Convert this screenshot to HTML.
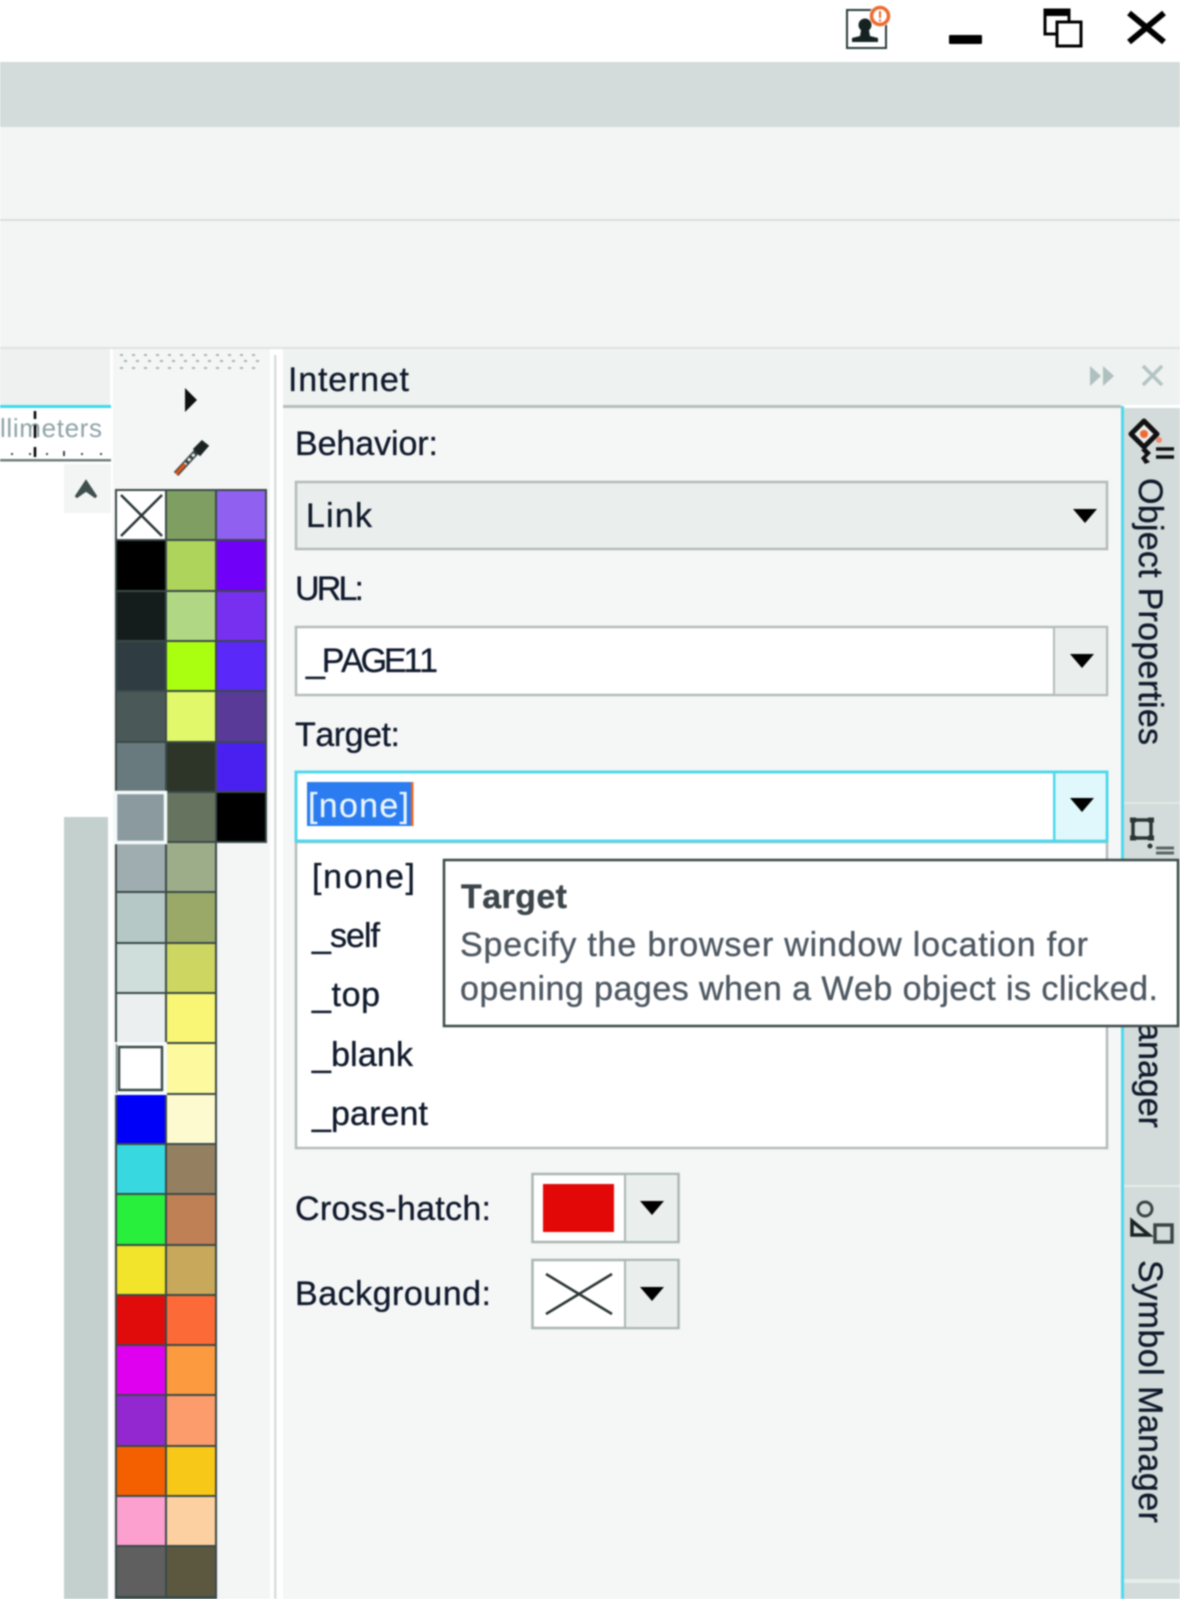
<!DOCTYPE html>
<html lang="en"><head><meta charset="utf-8"><title>Internet panel</title>
<style>
html,body{margin:0;padding:0;background:#fff;width:1180px;height:1599px;overflow:hidden}
svg{display:block;filter:blur(.7px)}
text{font-family:"Liberation Sans",sans-serif;font-size:34px;fill:#101a2c;stroke:#101a2c;stroke-width:.35px;font-kerning:none}
</style></head><body>
<svg xmlns="http://www.w3.org/2000/svg" width="1180" height="1599" viewBox="0 0 1180 1599">
<rect width="1180" height="1599" fill="#fff"/>
<rect y="62" width="1180" height="65" fill="#d3dcda"/>
<rect y="127" width="1180" height="221" fill="#f3f5f4"/>
<rect y="219" width="1180" height="2" fill="#d8dedc"/>
<rect y="347" width="1180" height="2" fill="#dde2e0"/>
<!-- window icons -->
<rect x="847" y="10" width="39" height="38" fill="none" stroke="#2a3a3a" stroke-width="2"/>
<circle cx="865" cy="25" r="6.5" fill="#162222"/>
<path d="M861 30h8l1 6 8 2v4h-26v-4l8-2z" fill="#162222"/>
<circle cx="880" cy="16" r="11" fill="#fff"/>
<circle cx="880" cy="16" r="8.5" fill="#fff" stroke="#ee6a30" stroke-width="3.5"/>
<rect x="879" y="11" width="2" height="7" fill="#ee6a30"/><rect x="879" y="19.5" width="2" height="2" fill="#ee6a30"/>
<rect x="949" y="35" width="33" height="9" rx="1" fill="#000"/>
<rect x="1045" y="10" width="24" height="24" fill="#fff" stroke="#000" stroke-width="3"/>
<rect x="1044" y="9" width="26" height="7" fill="#000"/>
<rect x="1057" y="22" width="24" height="24" fill="#fff" stroke="#000" stroke-width="3"/>
<path d="M1129 13l35 29M1164 13l-35 29" stroke="#000" stroke-width="6" fill="none"/>
<!-- left ruler -->
<rect y="349" width="110" height="56" fill="#eef1ef"/>
<rect y="405" width="111" height="3" fill="#3fd8ec"/>
<rect y="408" width="111" height="51" fill="#fff"/>
<rect y="459" width="111" height="2.5" fill="#6e7e7c"/>
<text x="0" y="437" textLength="102" style="font-size:26px;fill:#8fa3a8;stroke:none">llimeters</text>
<path d="M35 411v8M35 425v13M35 447v10" stroke="#000" stroke-width="2.5" fill="none"/>
<path d="M11 454h2M29 454h2M46 454h2M64 451v5M81 454h2M100 454h2" stroke="#3a4a48" stroke-width="2" fill="none"/>
<rect x="64" y="464" width="47" height="49" fill="#f3f5f4"/>
<path d="M76 497l10-15 10 15-10-7z" fill="#3f4e4e" stroke="#3f4e4e" stroke-width="3"/>
<rect x="64" y="817" width="44" height="782" fill="#c4d0ce"/>
<!-- palette column -->
<rect x="113" y="349" width="157" height="1250" fill="#f4f5f5"/>
<rect x="274" y="355" width="2.5" height="1244" fill="#d8dedc"/>
<path d="M120 355h140M124 361h136M120 368h140" stroke="#a8b2b0" stroke-width="2" stroke-dasharray="3 9" fill="none"/>
<path d="M185 388l12 12-12 12z" fill="#111"/>
<path d="M176 474l23-25" stroke="#3a4444" stroke-width="6" fill="none"/>
<path d="M176 474l23-25" stroke="#e6eaea" stroke-width="3" stroke-dasharray="3 3" fill="none"/>
<path d="M176 474l9-10" stroke="#d8551c" stroke-width="3.5" fill="none"/>
<path d="M195 449l7-7 5 4-7 8z" fill="#1a2222" stroke="#1a2222" stroke-width="3"/>
<g stroke="#3a4a48" stroke-width="2">
<rect x="116" y="490" width="50" height="50" fill="#fff"/><rect x="166" y="490" width="50" height="50" fill="#7f9f62"/><rect x="216" y="490" width="50" height="50" fill="#9060f0"/>
<rect x="116" y="540" width="50" height="51" fill="#000"/><rect x="166" y="540" width="50" height="51" fill="#aed45b"/><rect x="216" y="540" width="50" height="51" fill="#7000f8"/>
<rect x="116" y="591" width="50" height="50" fill="#141c1c"/><rect x="166" y="591" width="50" height="50" fill="#b0d884"/><rect x="216" y="591" width="50" height="50" fill="#7830f0"/>
<rect x="116" y="641" width="50" height="50" fill="#2f3d42"/><rect x="166" y="641" width="50" height="50" fill="#aaff10"/><rect x="216" y="641" width="50" height="50" fill="#5a28f8"/>
<rect x="116" y="691" width="50" height="51" fill="#4a5858"/><rect x="166" y="691" width="50" height="51" fill="#e0f86a"/><rect x="216" y="691" width="50" height="51" fill="#5a3a98"/>
<rect x="116" y="742" width="50" height="50" fill="#687a7e"/><rect x="166" y="742" width="50" height="50" fill="#2d3529"/><rect x="216" y="742" width="50" height="50" fill="#4a20f0"/>
<rect x="116" y="792" width="50" height="50" fill="#8a9a9e"/><rect x="166" y="792" width="50" height="50" fill="#66735f"/><rect x="216" y="792" width="50" height="50" fill="#000"/>
<rect x="116" y="842" width="50" height="50" fill="#9fadb0"/><rect x="166" y="842" width="50" height="50" fill="#9ead89"/>
<rect x="116" y="892" width="50" height="51" fill="#b6c8c6"/><rect x="166" y="892" width="50" height="51" fill="#9aa968"/>
<rect x="116" y="943" width="50" height="50" fill="#d0dedb"/><rect x="166" y="943" width="50" height="50" fill="#cdd660"/>
<rect x="116" y="993" width="50" height="50" fill="#ecefef"/><rect x="166" y="993" width="50" height="50" fill="#f8f674"/>
<rect x="116" y="1043" width="50" height="51" fill="#fff"/><rect x="166" y="1043" width="50" height="51" fill="#fdf99f"/>
<rect x="116" y="1094" width="50" height="50" fill="#0000f8"/><rect x="166" y="1094" width="50" height="50" fill="#fefad0"/>
<rect x="116" y="1144" width="50" height="50" fill="#38d8e0"/><rect x="166" y="1144" width="50" height="50" fill="#948060"/>
<rect x="116" y="1194" width="50" height="51" fill="#28ee3c"/><rect x="166" y="1194" width="50" height="51" fill="#c08056"/>
<rect x="116" y="1245" width="50" height="50" fill="#f2e42a"/><rect x="166" y="1245" width="50" height="50" fill="#c8a85a"/>
<rect x="116" y="1295" width="50" height="50" fill="#e00c0c"/><rect x="166" y="1295" width="50" height="50" fill="#fc6a38"/>
<rect x="116" y="1345" width="50" height="50" fill="#e000f0"/><rect x="166" y="1345" width="50" height="50" fill="#fc9a40"/>
<rect x="116" y="1395" width="50" height="51" fill="#9428d0"/><rect x="166" y="1395" width="50" height="51" fill="#fc9c6c"/>
<rect x="116" y="1446" width="50" height="50" fill="#f46000"/><rect x="166" y="1446" width="50" height="50" fill="#f8c818"/>
<rect x="116" y="1496" width="50" height="50" fill="#fca0d0"/><rect x="166" y="1496" width="50" height="50" fill="#fcd0a0"/>
<rect x="116" y="1546" width="50" height="51" fill="#5f5f5f"/><rect x="166" y="1546" width="50" height="51" fill="#5c5840"/>
<rect x="116" y="1597" width="50" height="10" fill="#3a4a48"/><rect x="166" y="1597" width="50" height="10" fill="#3a4a48"/>
</g>
<path d="M121 495l41 41M162 495l-41 41" stroke="#2a3434" stroke-width="2.5" fill="none"/>
<rect x="115.5" y="792.5" width="50" height="50" fill="none" stroke="#f4fafa" stroke-width="3.5"/>
<rect x="115" y="1043" width="51" height="51" fill="none" stroke="#f4fafa" stroke-width="2"/>
<rect x="119" y="1047" width="43" height="43" fill="#fff" stroke="#3a4a48" stroke-width="2.5"/>
<!-- panel -->
<rect x="283" y="349" width="897" height="56" fill="#eef2f0"/>
<rect x="283" y="405" width="838" height="3" fill="#b5bfbd"/>
<rect x="283" y="408" width="838" height="1191" fill="#f5f6f6"/>
<text x="288" y="391" textLength="121">Internet</text>
<path d="M1090 366l11 10-11 10zM1103 366l11 10-11 10z" fill="#aec0c0"/>
<path d="M1143 366l19 19M1162 366l-19 19" stroke="#b2c4c2" stroke-width="3.5" fill="none"/>
<text x="295" y="455" textLength="143">Behavior:</text>
<rect x="296" y="482" width="811" height="67" fill="#eaeeec" stroke="#b3bcba" stroke-width="2.5"/>
<text x="306" y="527" textLength="66">Link</text>
<path d="M1073 509h24l-12 14z" fill="#000"/>
<text x="295" y="600" textLength="69">URL:</text>
<rect x="296" y="627" width="811" height="68" fill="#fff" stroke="#b3bcba" stroke-width="2.5"/>
<rect x="1054" y="628" width="52" height="66" fill="#eaeeec"/><rect x="1053" y="627" width="2" height="68" fill="#b3bcba"/>
<text x="306" y="672" textLength="132">_PAGE11</text>
<path d="M1070 654h24l-12 14z" fill="#000"/>
<text x="295" y="746" textLength="105">Target:</text>
<!-- list -->
<rect x="296" y="842" width="811" height="306" fill="#fff" stroke="#b3bcba" stroke-width="2.5"/>
<text x="312" y="888" textLength="103">[none]</text>
<text x="312" y="947" textLength="68">_self</text>
<text x="312" y="1006" textLength="68">_top</text>
<text x="312" y="1066" textLength="101">_blank</text>
<text x="312" y="1125" textLength="116">_parent</text>
<!-- target combo -->
<rect x="296" y="772" width="811" height="69" fill="#fff" stroke="#4fd8ec" stroke-width="3"/>
<rect x="1054" y="774" width="51" height="65" fill="#e0f8fc"/><rect x="1053" y="772" width="2.5" height="69" fill="#4fd8ec"/>
<rect x="307" y="782" width="104" height="44" fill="#2a7cf0"/><rect x="411" y="782" width="2.5" height="44" fill="#e8672a"/>
<text x="308" y="817" textLength="101" style="fill:#eaf6ff;stroke:#eaf6ff;stroke-width:.2px">[none]</text>
<path d="M1070 798h24l-12 14z" fill="#000"/>
<!-- hatch -->
<text x="295" y="1220" textLength="196">Cross-hatch:</text>
<rect x="532.5" y="1174" width="146" height="68" fill="#fff" stroke="#aab6b4" stroke-width="2.5"/>
<rect x="625" y="1175" width="52" height="66" fill="#eaeeec"/><rect x="624" y="1174" width="2" height="68" fill="#aab6b4"/>
<rect x="543" y="1184" width="71" height="48" fill="#e30808"/>
<path d="M640 1201h24l-12 14z" fill="#000"/>
<text x="295" y="1305" textLength="196">Background:</text>
<rect x="532.5" y="1260" width="146" height="68" fill="#fff" stroke="#aab6b4" stroke-width="2.5"/>
<rect x="625" y="1261" width="52" height="66" fill="#eaeeec"/><rect x="624" y="1260" width="2" height="68" fill="#aab6b4"/>
<path d="M546 1274l66 40M612 1274l-66 40" stroke="#2a3434" stroke-width="2.5" fill="none"/>
<path d="M640 1287h24l-12 14z" fill="#000"/>
<!-- right rail -->
<rect x="1121" y="406" width="3" height="1193" fill="#4fd8ec"/>
<rect x="1124" y="408" width="56" height="1191" fill="#d3dcda"/>
<rect x="1124" y="802" width="56" height="2" fill="#e2e8e6"/>
<rect x="1124" y="1185" width="56" height="2" fill="#e6ecea"/>
<rect x="1124" y="1579" width="56" height="4" fill="#e6ecea"/>
<path d="M1144 421l-13 13 13 13 13-13z" fill="#e8ecec" stroke="#111" stroke-width="5" stroke-linejoin="round"/>
<circle cx="1144" cy="434" r="4" fill="#ee6a30"/>
<circle cx="1159" cy="440" r="3" fill="#ee8a70"/>
<path d="M1156 449h18M1156 457h18" stroke="#111" stroke-width="3.5"/>
<path d="M1146 448l5 5-5 5 4 4-5 2-4-6 4-4-4-4z" fill="#111"/>
<text transform="translate(1139 478) rotate(90)" x="0" y="0" textLength="267">Object Properties</text>
<rect x="1133" y="820" width="18" height="18" fill="none" stroke="#2a3636" stroke-width="3.5"/>
<path d="M1130 820h6M1148 820h6M1130 838h6M1148 838h6" stroke="#2a3636" stroke-width="5"/>
<path d="M1156 848h18M1156 853h18" stroke="#5a6664" stroke-width="3"/><circle cx="1150" cy="846" r="2.5" fill="#2a3636"/>
<text transform="translate(1139 994) rotate(90)" x="0" y="0" textLength="134">Manager</text>
<circle cx="1145" cy="1209" r="7" fill="none" stroke="#3a4646" stroke-width="3"/>
<path d="M1132 1221v14h17z" fill="none" stroke="#1a2424" stroke-width="3.5"/>
<rect x="1155" y="1225" width="17" height="17" fill="none" stroke="#3a4646" stroke-width="3.5"/>
<text transform="translate(1139 1260) rotate(90)" x="0" y="0" textLength="263">Symbol Manager</text>
<!-- tooltip -->
<rect x="444" y="860" width="734" height="166" fill="#fff" stroke="#3c4a48" stroke-width="2.5"/>
<text x="461" y="908" textLength="106" style="fill:#3c454a;stroke:#3c454a;stroke-width:.3px;font-weight:bold">Target</text>
<text x="460" y="956" textLength="628" style="fill:#4e5862;stroke:#4e5862">Specify the browser window location for</text>
<text x="460" y="1000" textLength="698" style="fill:#4e5862;stroke:#4e5862">opening pages when a Web object is clicked.</text>
</svg>
</body></html>
